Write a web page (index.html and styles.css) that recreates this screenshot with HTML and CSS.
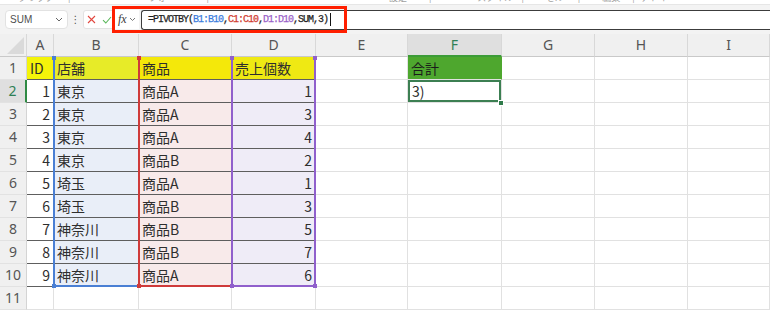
FILE: index.html
```html
<!DOCTYPE html>
<html lang="ja">
<head>
<meta charset="utf-8">
<link rel="stylesheet" href="styles.css">
</head>
<body>
<div class="app">
  <div class="ribbon">
    <span class="rt r1">クリップ</span><span class="rs r2">|</span><span class="rt r3">フォ</span><span class="rs r4">|</span>
    <span class="rt r5">設定</span><span class="rs r6">|</span><span class="rt r7">スタイル</span><span class="rs r8">|</span><span class="rt r9">セル</span><span class="rs r10">|</span><span class="rt r11">編集</span><span class="rs r12">|</span><span class="rt r13">アドイ</span>
  </div>
  <div class="fbar">
    <div class="namebox"><span class="nb-text">SUM</span><svg class="chev" width="8" height="5" viewBox="0 0 8 5"><path d="M1 1l3 3 3-3" stroke="#666" stroke-width="1" fill="none"/></svg></div>
    <div class="vdots">⋮</div>
    <div class="btns">
      <svg width="9" height="9" viewBox="0 0 9 9"><path d="M1 1l7 7M8 1l-7 7" stroke="#e2473f" stroke-width="1.1" fill="none"/></svg>
      <svg width="10" height="8" viewBox="0 0 10 8"><path d="M1 4.2l2.8 2.8L9 1" stroke="#5cb85c" stroke-width="1.1" fill="none"/></svg>
    </div>
    <div class="fxbox"><span class="fx">fx</span><svg width="7" height="5" viewBox="0 0 7 5"><path d="M1 1l2.5 2.5L6 1" stroke="#777" stroke-width="1" fill="none"/></svg></div>
    <div class="finput"><span class="ftext">=PIVOTBY(<span class="fb">B1:B10</span>,<span class="fr">C1:C10</span>,<span class="fp">D1:D10</span>,SUM,3)</span><span class="caret"></span></div>
    <div class="annot"></div>
  </div>
  <div class="sheet">
    <!-- header -->
    <div class="c ch corner"></div><div class="c ch">A</div><div class="c ch">B</div><div class="c ch">C</div><div class="c ch">D</div><div class="c ch">E</div><div class="c ch csel">F</div><div class="c ch">G</div><div class="c ch">H</div><div class="c ch">I</div>
    <!-- 1 -->
    <div class="c rh">1</div><div class="c t ya">ID</div><div class="c t yb">店舗</div><div class="c t yc">商品</div><div class="c t yd">売上個数</div><div class="c"></div><div class="c grn">合計</div><div class="c"></div><div class="c"></div><div class="c"></div>
    <!-- 2 -->
    <div class="c rh rsel">2</div><div class="c t num">1</div><div class="c t fb2">東京</div><div class="c t fr2">商品A</div><div class="c t fp2 num">1</div><div class="c"></div><div class="c active">3)</div><div class="c"></div><div class="c"></div><div class="c"></div>
    <!-- 3 -->
    <div class="c rh">3</div><div class="c t num">2</div><div class="c t fb2">東京</div><div class="c t fr2">商品A</div><div class="c t fp2 num">3</div><div class="c"></div><div class="c"></div><div class="c"></div><div class="c"></div><div class="c"></div>
    <!-- 4 -->
    <div class="c rh">4</div><div class="c t num">3</div><div class="c t fb2">東京</div><div class="c t fr2">商品A</div><div class="c t fp2 num">4</div><div class="c"></div><div class="c"></div><div class="c"></div><div class="c"></div><div class="c"></div>
    <!-- 5 -->
    <div class="c rh">5</div><div class="c t num">4</div><div class="c t fb2">東京</div><div class="c t fr2">商品B</div><div class="c t fp2 num">2</div><div class="c"></div><div class="c"></div><div class="c"></div><div class="c"></div><div class="c"></div>
    <!-- 6 -->
    <div class="c rh">6</div><div class="c t num">5</div><div class="c t fb2">埼玉</div><div class="c t fr2">商品A</div><div class="c t fp2 num">1</div><div class="c"></div><div class="c"></div><div class="c"></div><div class="c"></div><div class="c"></div>
    <!-- 7 -->
    <div class="c rh">7</div><div class="c t num">6</div><div class="c t fb2">埼玉</div><div class="c t fr2">商品B</div><div class="c t fp2 num">3</div><div class="c"></div><div class="c"></div><div class="c"></div><div class="c"></div><div class="c"></div>
    <!-- 8 -->
    <div class="c rh">8</div><div class="c t num">7</div><div class="c t fb2">神奈川</div><div class="c t fr2">商品B</div><div class="c t fp2 num">5</div><div class="c"></div><div class="c"></div><div class="c"></div><div class="c"></div><div class="c"></div>
    <!-- 9 -->
    <div class="c rh">9</div><div class="c t num">8</div><div class="c t fb2">神奈川</div><div class="c t fr2">商品B</div><div class="c t fp2 num">7</div><div class="c"></div><div class="c"></div><div class="c"></div><div class="c"></div><div class="c"></div>
    <!-- 10 -->
    <div class="c rh">10</div><div class="c t num">9</div><div class="c t fb2">神奈川</div><div class="c t fr2">商品A</div><div class="c t fp2 num">6</div><div class="c"></div><div class="c"></div><div class="c"></div><div class="c"></div><div class="c"></div>
    <!-- 11 -->
    <div class="c rh">11</div><div class="c"></div><div class="c"></div><div class="c"></div><div class="c"></div><div class="c"></div><div class="c"></div><div class="c"></div><div class="c"></div><div class="c"></div>

    <div class="rng rng-b"></div>
    <div class="rng rng-c"></div>
    <div class="rng rng-d"></div>
    <div class="sq sq-b sq-t1"></div>
    <div class="sq sq-b sq-b1"></div>
    <div class="sq sq-c sq-t2"></div>
    <div class="sq sq-c sq-b2"></div>
    <div class="sq sq-d sq-t3"></div>
    <div class="sq sq-d sq-b3"></div>
    <div class="sq sq-d sq-t4"></div>
    <div class="sq sq-d sq-b4"></div>
    <div class="handle"></div>
  </div>
</div>
</body>
</html>
```

FILE: styles.css
```css
html, body {
  margin: 0;
  padding: 0;
  background: #ffffff;
}
body {
  width: 770px;
  height: 310px;
  overflow: hidden;
  font-family: "Noto Sans CJK JP", "Noto Sans", sans-serif;
}
.app {
  width: 770px;
}

/* ribbon remnant */
.ribbon {
  height: 5px;
  overflow: hidden;
  display: flex;
  background: #ffffff;
  border-bottom: 1px solid #e6e6e6;
  box-sizing: border-box;
}
.ribbon span {
  font-size: 9px;
  line-height: 10px;
  margin-top: -7px;
  color: #a0a0a0;
  white-space: nowrap;
  flex: none;
}
.r1 { margin-left: 18px; }
.r2 { margin-left: 14px; }
.r3 { margin-left: 78px; }
.r4 { margin-left: 40px; }
.r5 { margin-left: 180px; }
.r6 { margin-left: 22px; }
.r7 { margin-left: 46px; }
.r8 { margin-left: 8px; }
.r9 { margin-left: 22px; }
.r10 { margin-left: 14px; }
.r11 { margin-left: 22px; }
.r12 { margin-left: 12px; }
.r13 { margin-left: 6px; }

/* formula bar */
.fbar {
  position: relative;
  height: 29px;
  background: #f3f3f3;
  display: flex;
  align-items: center;
  padding-left: 5px;
  box-sizing: border-box;
}
.namebox {
  width: 63px;
  height: 19px;
  box-sizing: border-box;
  background: #ffffff;
  border: 1px solid #e2e2e2;
  border-radius: 4px;
  display: flex;
  align-items: center;
  justify-content: space-between;
  padding: 0 4px 0 4px;
  flex: none;
}
.nb-text {
  font-family: "Liberation Sans", sans-serif;
  font-size: 10px;
  color: #505050;
}
.vdots {
  width: 15px;
  text-align: center;
  font-family: "DejaVu Sans", sans-serif;
  font-size: 10px;
  color: #555;
  flex: none;
}
.btns {
  width: 30px;
  height: 19px;
  box-sizing: border-box;
  background: #ffffff;
  border: 1px solid #e2e2e2;
  border-radius: 3px 0 0 3px;
  display: flex;
  align-items: center;
  gap: 6px;
  padding-left: 3px;
  flex: none;
}
.fxbox {
  width: 24px;
  height: 19px;
  margin-left: 2px;
  box-sizing: border-box;
  background: #ffffff;
  display: flex;
  align-items: center;
  gap: 2px;
  padding-left: 3px;
  flex: none;
}
.fx {
  font-family: "Liberation Serif", serif;
  font-style: italic;
  font-size: 12px;
  color: #3a3a3a;
}
.finput {
  flex: 1;
  height: 20px;
  margin-left: 2px;
  box-sizing: border-box;
  background: #ffffff;
  border: 1px solid #3c3c3c;
  border-right: none;
  border-radius: 3px 0 0 3px;
  display: flex;
  align-items: center;
  padding-left: 6px;
}
.ftext {
  font-family: "Liberation Mono", monospace;
  font-size: 10px;
  letter-spacing: -1px;
  color: #1e1e1e;
  white-space: nowrap;
  -webkit-text-stroke: 0.25px currentColor;
}
.fb { color: #3b7ddd; }
.fr { color: #d13b2f; }
.fp { color: #9a5fc8; }
.caret {
  width: 1px;
  height: 13px;
  background: #111;
  margin-left: 2px;
}
.annot {
  position: absolute;
  left: 112px;
  top: 1px;
  width: 235px;
  height: 27px;
  box-sizing: border-box;
  border: 3px solid #ff1f00;
}

/* sheet */
.sheet {
  position: relative;
  display: grid;
  grid-template-columns: 27px 27px 85px 93px 84px 92px 94px 93px 93px 82px;
  grid-auto-rows: 23px;
}
.c {
  box-sizing: border-box;
  border-right: 1px solid #e1e1e1;
  border-bottom: 1px solid #e1e1e1;
  font-size: 14px;
  line-height: 22px;
  padding: 0 3px;
  color: #2e2e2e;
  white-space: nowrap;
  overflow: hidden;
}
.ch {
  background: #f0f0f0;
  border-right-color: #d8d8d8;
  border-bottom-color: #c9c9c9;
  text-align: center;
  font-family: "Noto Sans", sans-serif;
  font-size: 14px;
  line-height: 22px;
  color: #555555;
}
.csel {
  background: #dfdfdf;
  color: #2f7f55;
  border-bottom: 2px solid #3c9b37;
}
.corner {
  position: relative;
}
.corner::after {
  content: "";
  position: absolute;
  right: 2px;
  bottom: 2px;
  width: 0;
  height: 0;
  border-left: 17px solid transparent;
  border-bottom: 17px solid #dadada;
}
.rh {
  background: #f0f0f0;
  border-right-color: #d4d4d4;
  border-bottom-color: #e2e2e2;
  text-align: center;
  padding: 0;
  font-family: "Noto Sans", sans-serif;
  font-size: 14px;
  color: #555555;
}
.rsel {
  background: #dfdfdf;
  color: #2f7f55;
  border-right: 2px solid #2f8a44;
}
.t {
  border-bottom-color: #5e5e5e;
}
.num { text-align: right; }
.ya { background: #f4f40a; }
.yb { background: #e7eb28; }
.yc { background: #f4e80a; }
.yd { background: #efe913; }
.fb2 { background: #e9eef8; }
.fr2 { background: #f8eaea; }
.fp2 { background: #efecf7; }
.grn {
  background: #4ea72e;
  color: #1b1b1b;
  border-right-color: #4ea72e;
}
.active {
  box-shadow: inset 0 0 0 2px #3c7f52;
  padding-left: 4px;
}

/* range highlight overlays */
.rng {
  position: absolute;
  top: 23px;
  height: 230px;
  box-sizing: border-box;
  border: 2px solid;
  border-top: none;
}
.rng-b { left: 53px; width: 87px; border-color: #4a7fd4; }
.rng-c { left: 138px; width: 95px; border-color: #cf3a3a; }
.rng-d { left: 231px; width: 85px; border-color: #9060cc; }
.sq {
  position: absolute;
  width: 4px;
  height: 4px;
}
.sq-b { background: #4a7fd4; }
.sq-c { background: #cf3a3a; }
.sq-d { background: #9060cc; }
.sq-t1 { left: 52px; top: 22px; }
.sq-b1 { left: 52px; top: 250px; }
.sq-t2 { left: 137px; top: 22px; }
.sq-b2 { left: 137px; top: 250px; }
.sq-t3 { left: 230px; top: 22px; }
.sq-b3 { left: 230px; top: 250px; }
.sq-t4 { left: 313px; top: 22px; }
.sq-b4 { left: 313px; top: 250px; }
.handle {
  position: absolute;
  left: 499px;
  top: 67px;
  width: 4px;
  height: 4px;
  background: #2f7a4a;
  border: 1px solid #ffffff;
  box-sizing: content-box;
  margin-left: -1px;
  margin-top: -1px;
}
```
